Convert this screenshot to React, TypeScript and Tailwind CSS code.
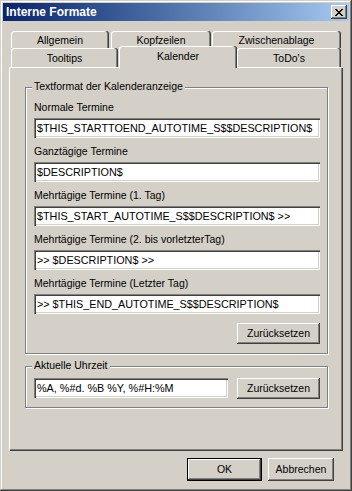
import React from 'react';

const raised =
  'bg-[#d4d0c8] shadow-[inset_-1px_-1px_#404040,inset_1px_1px_#ffffff,inset_-2px_-2px_#808080]';
const sunken =
  'bg-white shadow-[inset_1px_1px_#808080,inset_2px_2px_#404040,inset_-1px_-1px_#ffffff,inset_-2px_-2px_#d4d0c8]';
const tabBase =
  'flex justify-center rounded-t-[3px] bg-[#d4d0c8] leading-[13px] text-[10.5px] shadow-[inset_-1px_0_#404040,inset_-2px_0_#808080,inset_1px_1px_#ffffff]';

const CloseGlyph: React.FC = () => {
  const rows = ['XX....XX', '.XX..XX.', '..XXXX..', '...XX...', '..XXXX..', '.XX..XX.', 'XX....XX'];
  return (
    <svg width="8" height="7" viewBox="0 0 8 7" shapeRendering="crispEdges">
      {rows.map((r, y) =>
        r.split('').map((c, x) =>
          c === 'X' ? <rect key={`${x}-${y}`} x={x} y={y} width="1" height="1" fill="#000" /> : null
        )
      )}
    </svg>
  );
};

const Field: React.FC<{ label: string; value: string; last?: boolean }> = ({ label, value, last }) => (
  <div className={last ? '' : 'mb-[7px]'}>
    <div className="h-[17px] leading-[13px] text-[10.5px]">{label}</div>
    <div className={`${sunken} h-[20px] w-full pl-[3px] text-[10.8px] leading-[20px] whitespace-nowrap overflow-hidden`}>
      {value}
    </div>
  </div>
);

const Group: React.FC<{ title: string; className?: string; children: React.ReactNode }> = ({
  title,
  className,
  children
}) => (
  <div
    className={`relative w-[303px] border border-[#808080] shadow-[inset_1px_1px_#ffffff,1px_1px_#ffffff] pl-[8px] pr-[7px] ${className ?? ''}`}
  >
    <span className="absolute left-[6px] top-[-8px] bg-[#d4d0c8] px-[2px] leading-[13px] text-[10.5px]">
      {title}
    </span>
    {children}
  </div>
);

const App: React.FC = () => {
  return (
    <div className="w-[352px] h-[491px] overflow-hidden bg-[#d4d0c8] p-[3px] text-black font-['Liberation_Sans',Arial,sans-serif] shadow-[inset_-1px_-1px_#404040,inset_1px_1px_#d4d0c8,inset_-2px_-2px_#808080,inset_2px_2px_#ffffff]">
      {/* title bar */}
      <div className="flex h-[18px] items-center bg-linear-to-r from-[#0a246a] to-[#a6caf0] pl-[3px]">
        <span className="text-[12px] font-bold leading-[14px] text-white">Interne Formate</span>
        <div className={`${raised} ml-auto mr-[2px] flex h-[14px] w-[16px] items-start justify-center pt-[4px]`}>
          <CloseGlyph />
        </div>
      </div>

      {/* tabs */}
      <div className="ml-[6px] mt-[10px] w-[334px]">
        <div className="flex h-[17px] pl-[2px]">
          <div className={`${tabBase} h-[17px] w-[98px] pt-[3px]`}>Allgemein</div>
          <div className={`${tabBase} ml-[2px] h-[17px] w-[100px] pt-[3px]`}>Kopfzeilen</div>
          <div className={`${tabBase} ml-[1px] h-[17px] w-[129px] pt-[3px]`}>Zwischenablage</div>
        </div>
        <div className="flex h-[19px] items-start pl-[2px]">
          <div className={`${tabBase} h-[19px] w-[107px] pt-[4px]`}>Tooltips</div>
          <div className={`${tabBase} relative z-10 ml-[1px] -mt-[2px] h-[22px] w-[118px] pt-[4px]`}>Kalender</div>
          <div className={`${tabBase} h-[19px] w-[104px] pt-[4px]`}>ToDo's</div>
        </div>

        {/* panel */}
        <div className="h-[384px] w-[334px] bg-[#d4d0c8] px-[16px] pt-[20px] shadow-[inset_1px_1px_#ffffff,inset_-1px_-1px_#404040,inset_-2px_-2px_#808080]">
          <Group title="Textformat der Kalenderanzeige" className="pt-[13px] pb-[9px]">
            <Field label="Normale Termine" value="$THIS_STARTTOEND_AUTOTIME_S$$DESCRIPTION$" />
            <Field label="Ganztägige Termine" value="$DESCRIPTION$" />
            <Field label="Mehrtägige Termine (1. Tag)" value="$THIS_START_AUTOTIME_S$$DESCRIPTION$ >>" />
            <Field label="Mehrtägige Termine (2. bis vorletzterTag)" value=">> $DESCRIPTION$ >>" />
            <Field label="Mehrtägige Termine (Letzter Tag)" value=">> $THIS_END_AUTOTIME_S$$DESCRIPTION$" last />
            <div className="mt-[9px] flex justify-end">
              <button className={`${raised} h-[21px] w-[83px] text-[10.5px] leading-[21px]`}>Zurücksetzen</button>
            </div>
          </Group>

          <Group title="Aktuelle Uhrzeit" className="mt-[12px] pt-[11px] pb-[8px]">
            <div className="flex items-start">
              <div className={`${sunken} h-[20px] w-[194px] pl-[3px] text-[10.8px] leading-[20px] whitespace-nowrap`}>
                %A, %#d. %B %Y, %#H:%M
              </div>
              <button className={`${raised} ml-auto h-[21px] w-[83px] text-[10.5px] leading-[21px]`}>Zurücksetzen</button>
            </div>
          </Group>
        </div>
      </div>

      {/* footer */}
      <div className="mt-[7px] flex gap-[6px] pl-[184px]">
        <button className="h-[23px] w-[75px] border border-black bg-[#d4d0c8] text-[10.5px] leading-[21px] shadow-[inset_-1px_-1px_#404040,inset_1px_1px_#ffffff,inset_-2px_-2px_#808080]">
          OK
        </button>
        <button className={`${raised} h-[23px] w-[66px] text-[10.5px] leading-[23px]`}>Abbrechen</button>
      </div>
    </div>
  );
};

export default App;
